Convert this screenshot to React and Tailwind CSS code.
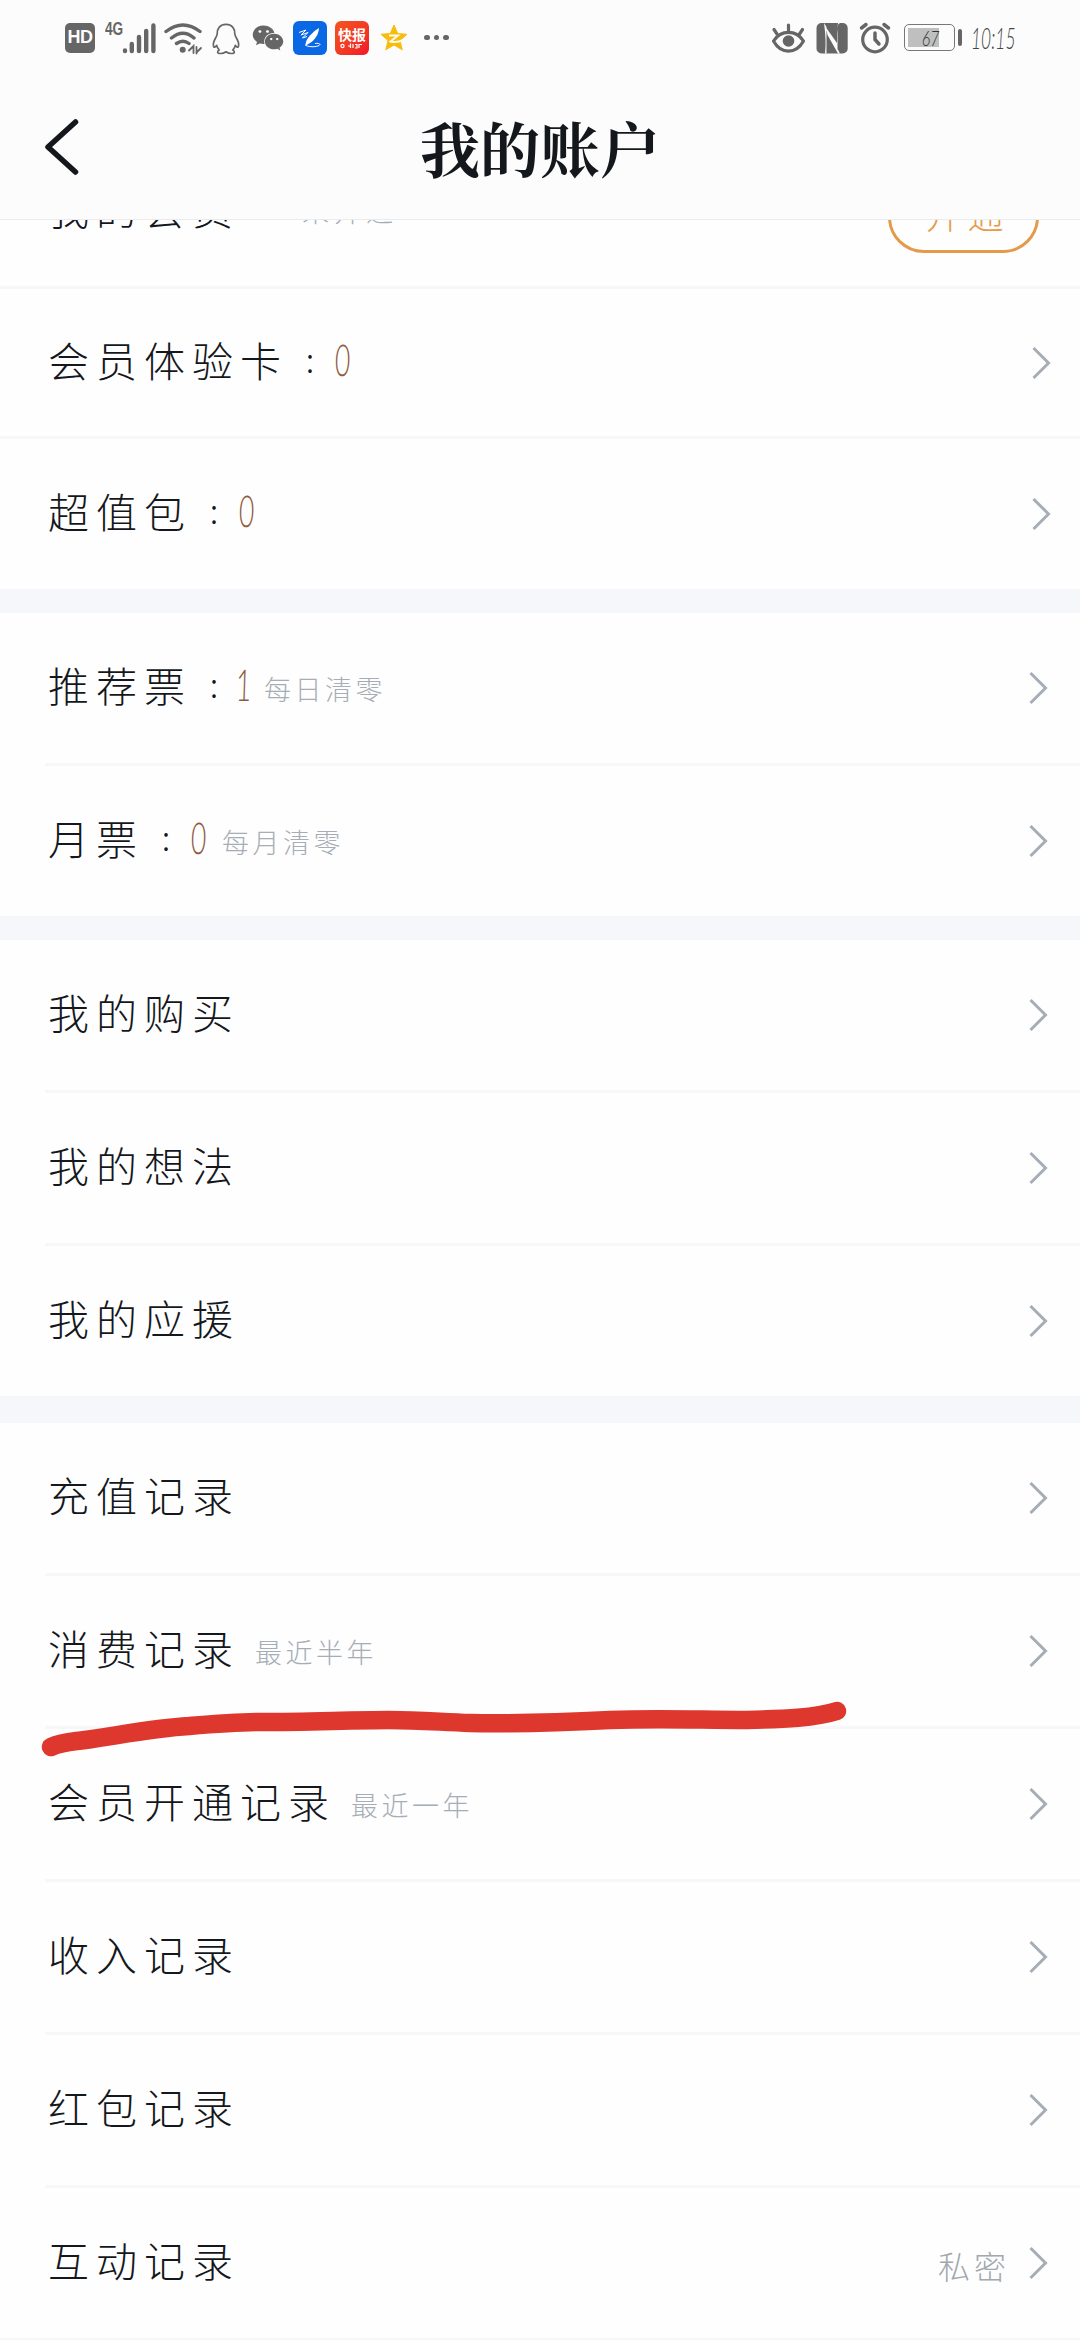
import { FaWeixin } from "react-icons/fa6";

const ticketRows = [
  { label: "推荐票", count: 1, note: "每日清零" },
  { label: "月票", count: 0, note: "每月清零" },
];

const mineRows = [{ label: "我的购买" }, { label: "我的想法" }, { label: "我的应援" }];

const recordRows = [
  { label: "充值记录" },
  { label: "消费记录", note: "最近半年", marked: true },
  { label: "会员开通记录", note: "最近一年" },
  { label: "收入记录" },
  { label: "红包记录" },
  { label: "互动记录", extra: "私密" },
];

function Chevron() {
  return (
    <svg className="w-5 h-9 shrink-0" viewBox="0 0 20 36" fill="none" stroke="#a6adb5" strokeWidth="3">
      <path d="M2.500 3 L17.500 18 L2.500 33" />
    </svg>
  );
}

function Label({ text, count }) {
  return (
    <>
      <span className="text-[41px] leading-[60px] tracking-[7px] text-[#14171c]">{text}</span>
      {count !== undefined && (
        <>
          <span className="w-12 -ml-0.5 text-center text-[34px] leading-[60px] text-[#14171c]">:</span>
          <span className={`${count === 1 ? "w-[11px]" : "w-[17px]"} flex justify-center font-[Lato] font-light text-[44px] leading-[60px] text-[#8f5b42]`}>
            <span className="inline-block scale-x-[0.6] -skew-x-3">{count}</span>
          </span>
        </>
      )}
    </>
  );
}

function Row({ label, count, note, extra, marked, last, full }) {
  return (
    <div className={`relative ${last || full ? "h-[150px]" : "h-[153px]"} ${full ? "" : "pl-[45px]"}`}>
      <div className={`h-full flex items-center ${last ? "" : "border-b-[3px] border-[#f6f7f8]"} ${full ? "pl-12 pr-[29px]" : "pl-[3px] pr-8"}`}>
        <div className="flex-1 flex items-center -mt-2">
          <Label text={label} count={count} />
          {note && <span className="ml-[15px] mt-2.5 text-[27px] leading-10 tracking-[3.500px] text-[#a6adb5]">{note}</span>}
        </div>
        {extra && <span className="mr-[18px] mt-1 text-[32px] tracking-[4px] text-[#a1a8ae]">{extra}</span>}
        <Chevron />
      </div>
      {marked && (
        <svg className="absolute left-0 top-0 z-10 w-[900px] h-[200px]" viewBox="0 0 900 200" fill="none" stroke="#de372d" strokeWidth="18.5" strokeLinecap="round" strokeLinejoin="round">
          <path d="M51 171 C62 166 70 166 85 164 C120 159 155 152 189 150 C225 147 240 146 262 146 C310 146 350 144 389 144 C420 144 440 146 470 147 C520 148 570 146 610 144 C660 142 700 144 747 144 C785 143 815 142 837 135" />
        </svg>
      )}
    </div>
  );
}

function Section({ rows }) {
  return rows.map((r, i) => <Row key={r.label} {...r} last={i === rows.length - 1} />);
}

function StatusBar() {
  return (
    <div className="h-[75px] flex items-center pl-[65px] text-[#666]">
      <div className="w-[30px] h-[30px] rounded-[5px] bg-[#666] text-[#fcfcfc] flex items-center justify-center font-['Liberation_Sans'] font-bold text-[18px] tracking-[-0.5px]">HD</div>
      <div className="ml-2.5 w-[18px] self-start mt-[18px] font-['Liberation_Sans'] font-bold text-[19px] leading-[22px]">
        <span className="inline-block origin-left scale-x-[0.72]">4G</span>
      </div>
      <svg className="-ml-1 w-10 h-[34px]" viewBox="119 20 40 34" stroke="currentColor" strokeWidth="4.4" strokeLinecap="round">
        <path d="M125 49.5V50M131.8 43V50M139 36V50M146.2 30V50M153.4 24.5V50" />
      </svg>
      <svg className="ml-1 w-10 h-[34px]" viewBox="163 20 40 34" fill="none" stroke="currentColor" strokeWidth="3.4" strokeLinecap="round">
        <path d="M166 30.5Q183 17.500 200 30.500M171.500 37Q183 27.500 194 37M176.500 42.500Q183 38 189 42.500" />
        <circle cx="182.700" cy="48.700" r="3" fill="currentColor" stroke="none" />
        <path d="M189 49.500L193.500 45V52M196.500 52.500V46M197 51L201 47" strokeWidth="1.800" />
      </svg>
      {/* penguin */}
      <svg className="ml-2 w-[30px] h-[34px]" viewBox="211 20 30 34" fill="none" stroke="currentColor" strokeWidth="1.7" strokeLinejoin="round">
        <path d="M226 23.300C220 23.300 217 27.500 217.200 33C217 35.500 214.500 38 213.600 41.500C213 44.500 213.500 46.300 214.500 46.200C215.500 46 216.300 44.800 216.700 44.300C217 46.300 218 47.800 219.300 49C217 50 217 52.500 220 52.500C223 52.700 225 51.500 226 50.800C227 51.500 229 52.700 232 52.500C235 52.500 235 50 232.700 49C234 47.800 235 46.300 235.300 44.300C235.700 44.800 236.500 46 237.500 46.200C238.500 46.300 239 44.500 238.400 41.500C237.500 38 235 35.500 234.800 33C235 27.500 232 23.300 226 23.300Z" />
      </svg>
      <FaWeixin className="ml-[11px] w-[32px] h-[32px]" />
      {/* feather app */}
      <svg className="ml-[9px] w-[34px] h-[34px]" viewBox="0 0 34 34">
        <rect width="34" height="34" rx="6" fill="#0a68e4" />
        <path d="M26 7C21 10 16 15 13.500 19.500L12 25L17 22C22 18.500 25.500 14 26 7Z" fill="#fff" />
        <path d="M6 11.500L13 9L8 14L15 11.500L9.500 17L14 15.500M13 24.500C17 26.500 26 26 27 23.500C27 22.500 24 22 22 22.500" fill="none" stroke="#fff" strokeWidth="1" />
      </svg>
      <div className="ml-2 w-[34px] h-[34px] rounded-md bg-linear-to-br from-[#f5531c] to-[#f0142a] text-white flex flex-col items-center justify-center font-bold">
        <span className="text-[14px] leading-[15px] mt-0.5">快报</span>
        <svg className="w-6 h-2" viewBox="0 0 24 8" fill="none" stroke="#fff" strokeWidth="1.200">
          <circle cx="2.500" cy="4" r="1.600" />
          <path d="M8 4H11M10.500 1.500V6M13 2V6M15 2.500H17V6H15M19 6V2.500H22" />
        </svg>
      </div>
      <svg className="ml-2.5 w-[30px] h-[30px]" viewBox="0 0 30 30">
        <path d="M15 2L18.700 10.500L28 11.300L21 17.500L23.200 26.800L15 22L6.800 26.800L9 17.500L2 11.300L11.300 10.500Z" fill="#f8bd0c" stroke="#f8bd0c" strokeWidth="1" strokeLinejoin="round" />
        <path d="M10 12.500H19L11.500 18.500C15 19.500 20 19 24 17.200" fill="none" stroke="#fffbe8" strokeWidth="2" />
      </svg>
      <div className="ml-[15px] flex gap-1">
        <i className="w-[5.5px] h-[5.5px] rounded-full bg-[#666]" />
        <i className="w-[5.5px] h-[5.5px] rounded-full bg-[#666]" />
        <i className="w-[5.5px] h-[5.5px] rounded-full bg-[#666]" />
      </div>

      <div className="ml-auto mr-[66px] w-[244px] flex items-center">
        <svg className="w-9 h-[34px] shrink-0" viewBox="770 20 36 34" fill="none" stroke="currentColor" strokeWidth="3.200" strokeLinecap="round">
          <path d="M773.500 40C781 28.500 796 28.500 803.500 40C796 53.500 781 53.500 773.500 40Z" strokeLinejoin="round" />
          <circle cx="788.500" cy="40" r="5.800" fill="currentColor" stroke="none" />
          <path d="M788.500 24V30M774 28.500L777 33M802.500 28.500L799.500 33" />
        </svg>
        <svg className="ml-[9px] w-[34px] h-[34px] shrink-0" viewBox="815 20 34 34">
          <rect x="816.500" y="22" width="31.200" height="30.500" rx="5" fill="#666" />
          <path d="M824 22L826.500 26V52.500H825Q826.500 40 824 22ZM826 26.500L837 42V33L838 22H840L837.500 24V48L840 52.500H838L827.500 34Z" fill="#fcfcfc" />
        </svg>
        <svg className="ml-[9px] w-[34px] h-[34px] shrink-0" viewBox="857 20 34 34" fill="none" stroke="currentColor" strokeWidth="3.200" strokeLinecap="round">
          <circle cx="874" cy="38.500" r="12.300" />
          <path d="M874 32V38.500L878 43M860.500 27L865 23.500M887.500 27L883 23.500" strokeWidth="3.500" />
        </svg>
        <div className="ml-[12px] w-[51px] h-[27px] shrink-0 rounded-[5px] border-[1.5px] border-[#777] p-[3px] flex">
          <div className="w-[31px] h-full bg-[#bfbfbf] flex items-center justify-end">
            <span className="inline-block origin-right scale-x-[0.72] font-[Lato] font-light italic text-[22px] leading-5 text-[#333]">67</span>
          </div>
        </div>
        <div className="ml-[3px] w-1 h-[17px] shrink-0 rounded-sm bg-[#666]" />
        <div className="ml-[9px] w-[43px] font-[Lato] font-light italic text-[29px] leading-8 text-[#444]">
          <span className="inline-block origin-left scale-x-[0.6]">10:15</span>
        </div>
      </div>
    </div>
  );
}

export default function App() {
  return (
    <div className="w-[1080px] h-[2340px] overflow-hidden bg-[#fefefe] font-light font-['Noto_Sans_CJK_SC',sans-serif] whitespace-nowrap">
      <header className="h-[220px] bg-[#fcfcfc] border-b border-[#e9ecee]">
        <StatusBar />
        <div className="h-[144px] grid grid-cols-[1fr_auto_1fr] items-center">
          <svg className="ml-[42px] w-10 h-[60px]" viewBox="0 0 40 60" fill="none" stroke="#14171c" strokeWidth="5.500" strokeLinecap="round" strokeLinejoin="round">
            <path d="M33.500 5L6 30L33.500 55" />
          </svg>
          <h1 className="font-['Noto_Serif_CJK_SC','Noto_Sans_CJK_SC',serif] font-bold text-[60px] leading-[80px] text-[#14171c]">我的账户</h1>
        </div>
      </header>

      {/* row scrolled half under the header */}
      <div className="h-[69px] overflow-hidden flex flex-col justify-end">
        <div className="h-[150px] shrink-0 flex items-center border-b-[3px] border-[#f6f7f8] pl-12 pr-[41px]">
          <div className="flex-1 flex items-center -mt-3">
            <span className="text-[41px] leading-[60px] tracking-[7px] text-[#14171c]">我的会员</span>
            <span className="ml-[62px] mt-2 text-[27px] leading-10 tracking-[5px] text-[#a6adb5]">未开通</span>
          </div>
          <button className="w-[151px] h-20 rounded-[36px] border-[3px] border-[#e59a4a] text-[36px] leading-[74px] tracking-[6px] pl-2 text-[#e59a4a]">开通</button>
        </div>
      </div>
      <Row full label="会员体验卡" count={0} />
      <Row full last label="超值包" count={0} />
      <div className="h-6 bg-[#f5f7fa]" />
      <Section rows={ticketRows} />
      <div className="h-6 bg-[#f5f7fa]" />
      <Section rows={mineRows} />
      <div className="h-[27px] bg-[#f5f7fa]" />
      <Section rows={recordRows} />
      <div className="h-6 bg-[#f5f7fa]" />
    </div>
  );
}
